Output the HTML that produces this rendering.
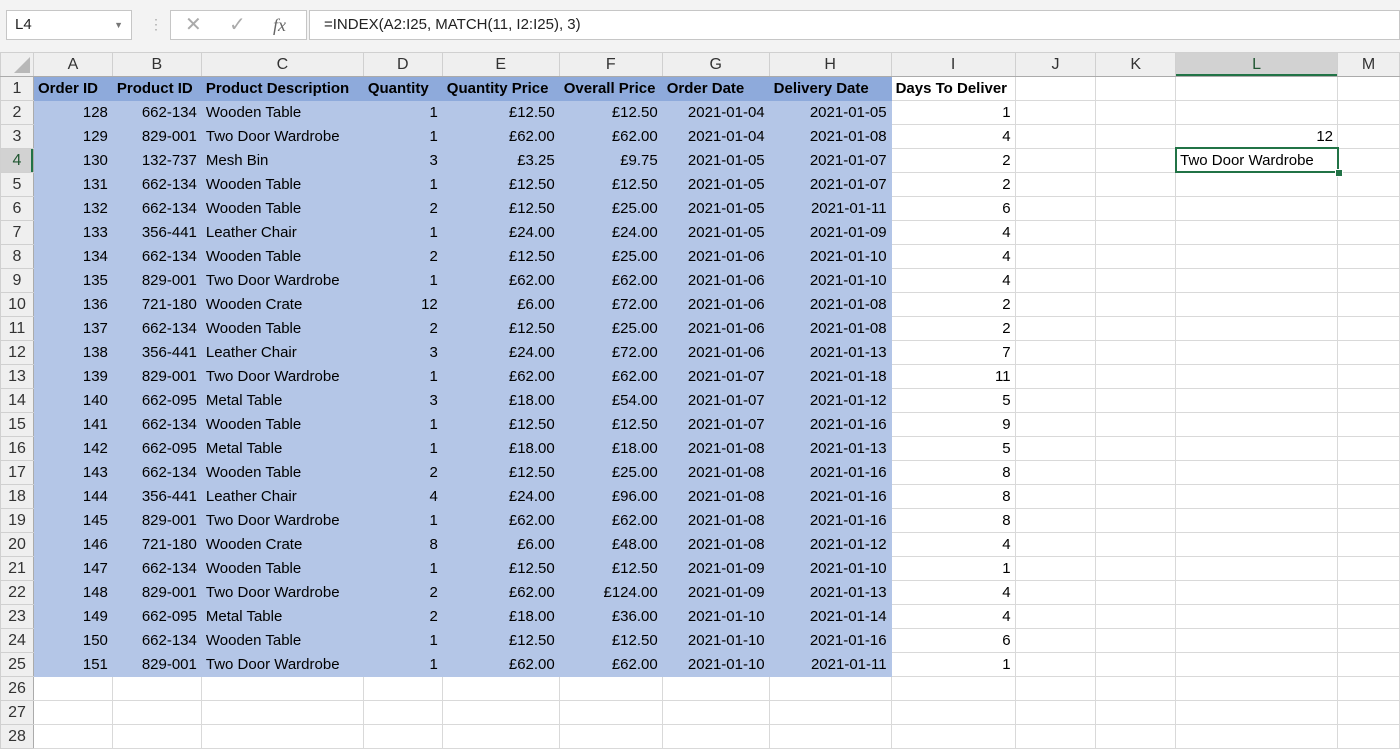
<!DOCTYPE html>
<html><head><style>
body{margin:0;width:1400px;height:731px;overflow:hidden;background:#fff;font-family:"Liberation Sans",sans-serif;}
#top{position:absolute;left:0;top:0;width:1400px;height:52px;background:#f3f3f3;}
.box{position:absolute;background:#fff;border:1px solid #c6c6c6;box-sizing:border-box;height:30px;top:10px;font-size:15px;line-height:28px;color:#222;}
table{position:absolute;left:0;top:52px;border-collapse:collapse;table-layout:fixed;font-size:15px;}
tr{height:24px}
td{height:23px;padding:0 4px;border:1px solid #d9d9d9;white-space:nowrap;overflow:hidden;line-height:23px;color:#000;}
tr.h td{background:#efefef;border-color:#d0d0d0;border-bottom-color:#ababab;text-align:center;color:#333;font-size:16px;}
td.rh{background:#efefef;border-color:#d0d0d0;border-right-color:#ababab;text-align:center;padding:0;color:#333;font-size:16px;}
td.b{background:#b4c6e7;border-color:#b4c6e7;}
td.hb{background:#8eaadb;border-color:#8eaadb;font-weight:bold;}
.r{text-align:right}
td.bold{font-weight:bold}
#sel{position:absolute;left:1175px;top:147px;width:164px;height:26px;box-sizing:border-box;border:2px solid #217346;}
#handle{position:absolute;left:1335px;top:169px;width:6px;height:6px;background:#217346;border:1px solid #fff;}
</style></head><body>
<div id="top">
<div class="box" style="left:6px;width:126px;padding-left:8px">L4<span style="position:absolute;right:8px;top:0;font-size:9px;color:#777">▼</span></div>
<div style="position:absolute;left:149px;top:16px;color:#aaa;font-size:14px">⋮</div>
<div class="box" style="left:170px;width:137px;color:#aaa;font-size:20px"><span style="position:absolute;left:14px">✕</span><span style="position:absolute;left:58px">✓</span><span style="position:absolute;left:102px;font-family:'Liberation Serif',serif;font-style:italic;font-size:18px;color:#666">fx</span></div>
<div class="box" style="left:309px;width:1091px;padding-left:14px">=INDEX(A2:I25, MATCH(11, I2:I25), 3)</div>
</div>
<table>
<colgroup><col style="width:33px"><col style="width:79px"><col style="width:89px"><col style="width:162px"><col style="width:79px"><col style="width:117px"><col style="width:103px"><col style="width:107px"><col style="width:122px"><col style="width:124px"><col style="width:81px"><col style="width:80px"><col style="width:162px"><col style="width:62px"></colgroup>
<tr class="h"><td style="padding:0;position:relative"><svg width="18" height="18" style="position:absolute;right:2px;bottom:2px"><polygon points="17,1 17,17 1,17" fill="#b8b8b8"/></svg></td><td>A</td><td>B</td><td>C</td><td>D</td><td>E</td><td>F</td><td>G</td><td>H</td><td>I</td><td>J</td><td>K</td><td style="background:#d2d2d2;box-shadow:inset 0 -2px 0 #217346;color:#215732">L</td><td>M</td></tr>
<tr><td class="rh">1</td><td class="hb">Order ID</td><td class="hb">Product ID</td><td class="hb">Product Description</td><td class="hb">Quantity</td><td class="hb">Quantity Price</td><td class="hb">Overall Price</td><td class="hb">Order Date</td><td class="hb">Delivery Date</td><td class="bold">Days To Deliver</td><td></td><td></td><td></td><td></td></tr>
<tr><td class="rh">2</td><td class="b r">128</td><td class="b r">662-134</td><td class="b">Wooden Table</td><td class="b r">1</td><td class="b r">£12.50</td><td class="b r">£12.50</td><td class="b r">2021-01-04</td><td class="b r">2021-01-05</td><td class="r">1</td><td></td><td></td><td></td><td></td></tr>
<tr><td class="rh">3</td><td class="b r">129</td><td class="b r">829-001</td><td class="b">Two Door Wardrobe</td><td class="b r">1</td><td class="b r">£62.00</td><td class="b r">£62.00</td><td class="b r">2021-01-04</td><td class="b r">2021-01-08</td><td class="r">4</td><td></td><td></td><td class="r">12</td><td></td></tr>
<tr><td class="rh" style="background:#d2d2d2;box-shadow:inset -2px 0 0 #217346;color:#215732">4</td><td class="b r">130</td><td class="b r">132-737</td><td class="b">Mesh Bin</td><td class="b r">3</td><td class="b r">£3.25</td><td class="b r">£9.75</td><td class="b r">2021-01-05</td><td class="b r">2021-01-07</td><td class="r">2</td><td></td><td></td><td>Two Door Wardrobe</td><td></td></tr>
<tr><td class="rh">5</td><td class="b r">131</td><td class="b r">662-134</td><td class="b">Wooden Table</td><td class="b r">1</td><td class="b r">£12.50</td><td class="b r">£12.50</td><td class="b r">2021-01-05</td><td class="b r">2021-01-07</td><td class="r">2</td><td></td><td></td><td></td><td></td></tr>
<tr><td class="rh">6</td><td class="b r">132</td><td class="b r">662-134</td><td class="b">Wooden Table</td><td class="b r">2</td><td class="b r">£12.50</td><td class="b r">£25.00</td><td class="b r">2021-01-05</td><td class="b r">2021-01-11</td><td class="r">6</td><td></td><td></td><td></td><td></td></tr>
<tr><td class="rh">7</td><td class="b r">133</td><td class="b r">356-441</td><td class="b">Leather Chair</td><td class="b r">1</td><td class="b r">£24.00</td><td class="b r">£24.00</td><td class="b r">2021-01-05</td><td class="b r">2021-01-09</td><td class="r">4</td><td></td><td></td><td></td><td></td></tr>
<tr><td class="rh">8</td><td class="b r">134</td><td class="b r">662-134</td><td class="b">Wooden Table</td><td class="b r">2</td><td class="b r">£12.50</td><td class="b r">£25.00</td><td class="b r">2021-01-06</td><td class="b r">2021-01-10</td><td class="r">4</td><td></td><td></td><td></td><td></td></tr>
<tr><td class="rh">9</td><td class="b r">135</td><td class="b r">829-001</td><td class="b">Two Door Wardrobe</td><td class="b r">1</td><td class="b r">£62.00</td><td class="b r">£62.00</td><td class="b r">2021-01-06</td><td class="b r">2021-01-10</td><td class="r">4</td><td></td><td></td><td></td><td></td></tr>
<tr><td class="rh">10</td><td class="b r">136</td><td class="b r">721-180</td><td class="b">Wooden Crate</td><td class="b r">12</td><td class="b r">£6.00</td><td class="b r">£72.00</td><td class="b r">2021-01-06</td><td class="b r">2021-01-08</td><td class="r">2</td><td></td><td></td><td></td><td></td></tr>
<tr><td class="rh">11</td><td class="b r">137</td><td class="b r">662-134</td><td class="b">Wooden Table</td><td class="b r">2</td><td class="b r">£12.50</td><td class="b r">£25.00</td><td class="b r">2021-01-06</td><td class="b r">2021-01-08</td><td class="r">2</td><td></td><td></td><td></td><td></td></tr>
<tr><td class="rh">12</td><td class="b r">138</td><td class="b r">356-441</td><td class="b">Leather Chair</td><td class="b r">3</td><td class="b r">£24.00</td><td class="b r">£72.00</td><td class="b r">2021-01-06</td><td class="b r">2021-01-13</td><td class="r">7</td><td></td><td></td><td></td><td></td></tr>
<tr><td class="rh">13</td><td class="b r">139</td><td class="b r">829-001</td><td class="b">Two Door Wardrobe</td><td class="b r">1</td><td class="b r">£62.00</td><td class="b r">£62.00</td><td class="b r">2021-01-07</td><td class="b r">2021-01-18</td><td class="r">11</td><td></td><td></td><td></td><td></td></tr>
<tr><td class="rh">14</td><td class="b r">140</td><td class="b r">662-095</td><td class="b">Metal Table</td><td class="b r">3</td><td class="b r">£18.00</td><td class="b r">£54.00</td><td class="b r">2021-01-07</td><td class="b r">2021-01-12</td><td class="r">5</td><td></td><td></td><td></td><td></td></tr>
<tr><td class="rh">15</td><td class="b r">141</td><td class="b r">662-134</td><td class="b">Wooden Table</td><td class="b r">1</td><td class="b r">£12.50</td><td class="b r">£12.50</td><td class="b r">2021-01-07</td><td class="b r">2021-01-16</td><td class="r">9</td><td></td><td></td><td></td><td></td></tr>
<tr><td class="rh">16</td><td class="b r">142</td><td class="b r">662-095</td><td class="b">Metal Table</td><td class="b r">1</td><td class="b r">£18.00</td><td class="b r">£18.00</td><td class="b r">2021-01-08</td><td class="b r">2021-01-13</td><td class="r">5</td><td></td><td></td><td></td><td></td></tr>
<tr><td class="rh">17</td><td class="b r">143</td><td class="b r">662-134</td><td class="b">Wooden Table</td><td class="b r">2</td><td class="b r">£12.50</td><td class="b r">£25.00</td><td class="b r">2021-01-08</td><td class="b r">2021-01-16</td><td class="r">8</td><td></td><td></td><td></td><td></td></tr>
<tr><td class="rh">18</td><td class="b r">144</td><td class="b r">356-441</td><td class="b">Leather Chair</td><td class="b r">4</td><td class="b r">£24.00</td><td class="b r">£96.00</td><td class="b r">2021-01-08</td><td class="b r">2021-01-16</td><td class="r">8</td><td></td><td></td><td></td><td></td></tr>
<tr><td class="rh">19</td><td class="b r">145</td><td class="b r">829-001</td><td class="b">Two Door Wardrobe</td><td class="b r">1</td><td class="b r">£62.00</td><td class="b r">£62.00</td><td class="b r">2021-01-08</td><td class="b r">2021-01-16</td><td class="r">8</td><td></td><td></td><td></td><td></td></tr>
<tr><td class="rh">20</td><td class="b r">146</td><td class="b r">721-180</td><td class="b">Wooden Crate</td><td class="b r">8</td><td class="b r">£6.00</td><td class="b r">£48.00</td><td class="b r">2021-01-08</td><td class="b r">2021-01-12</td><td class="r">4</td><td></td><td></td><td></td><td></td></tr>
<tr><td class="rh">21</td><td class="b r">147</td><td class="b r">662-134</td><td class="b">Wooden Table</td><td class="b r">1</td><td class="b r">£12.50</td><td class="b r">£12.50</td><td class="b r">2021-01-09</td><td class="b r">2021-01-10</td><td class="r">1</td><td></td><td></td><td></td><td></td></tr>
<tr><td class="rh">22</td><td class="b r">148</td><td class="b r">829-001</td><td class="b">Two Door Wardrobe</td><td class="b r">2</td><td class="b r">£62.00</td><td class="b r">£124.00</td><td class="b r">2021-01-09</td><td class="b r">2021-01-13</td><td class="r">4</td><td></td><td></td><td></td><td></td></tr>
<tr><td class="rh">23</td><td class="b r">149</td><td class="b r">662-095</td><td class="b">Metal Table</td><td class="b r">2</td><td class="b r">£18.00</td><td class="b r">£36.00</td><td class="b r">2021-01-10</td><td class="b r">2021-01-14</td><td class="r">4</td><td></td><td></td><td></td><td></td></tr>
<tr><td class="rh">24</td><td class="b r">150</td><td class="b r">662-134</td><td class="b">Wooden Table</td><td class="b r">1</td><td class="b r">£12.50</td><td class="b r">£12.50</td><td class="b r">2021-01-10</td><td class="b r">2021-01-16</td><td class="r">6</td><td></td><td></td><td></td><td></td></tr>
<tr><td class="rh">25</td><td class="b r">151</td><td class="b r">829-001</td><td class="b">Two Door Wardrobe</td><td class="b r">1</td><td class="b r">£62.00</td><td class="b r">£62.00</td><td class="b r">2021-01-10</td><td class="b r">2021-01-11</td><td class="r">1</td><td></td><td></td><td></td><td></td></tr>
<tr><td class="rh">26</td><td></td><td></td><td></td><td></td><td></td><td></td><td></td><td></td><td></td><td></td><td></td><td></td><td></td></tr>
<tr><td class="rh">27</td><td></td><td></td><td></td><td></td><td></td><td></td><td></td><td></td><td></td><td></td><td></td><td></td><td></td></tr>
<tr><td class="rh">28</td><td></td><td></td><td></td><td></td><td></td><td></td><td></td><td></td><td></td><td></td><td></td><td></td><td></td></tr>
</table>
<div id="sel"></div><div id="handle"></div>
</body></html>
